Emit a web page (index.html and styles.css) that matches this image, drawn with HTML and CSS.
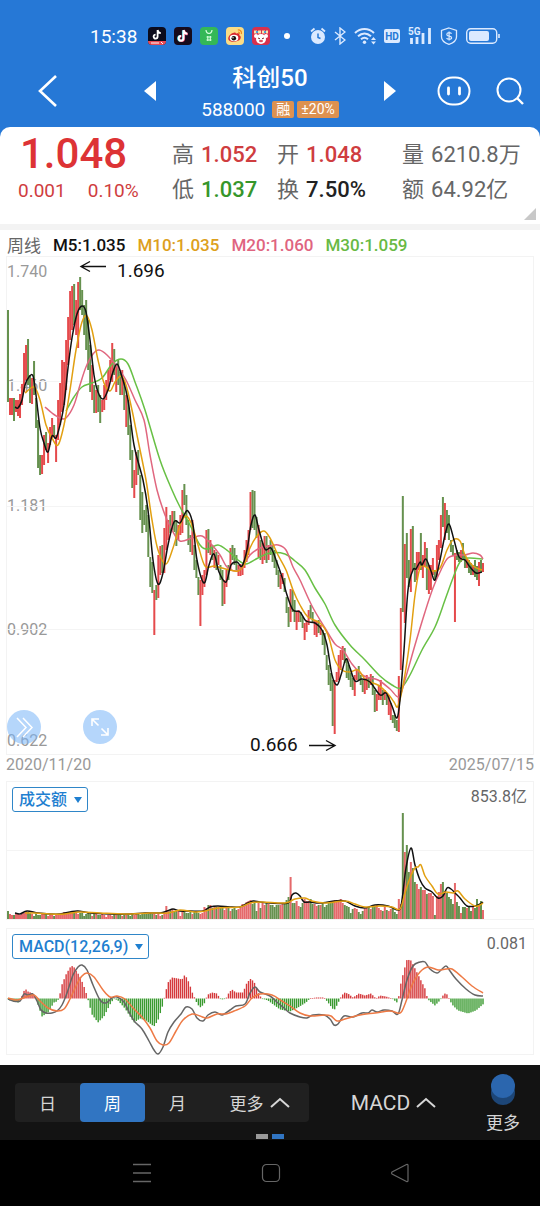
FILE: index.html
```html
<!DOCTYPE html>
<html lang="zh-CN">

<head>
    <meta charset="UTF-8">
    <meta name="viewport" content="width=device-width, initial-scale=1.0">
    <title>科创50 588000</title>
    <link rel="stylesheet" href="styles.css">
</head>

<body>
    <header class="top">
        <div class="status">
            <span class="time">15:38</span>
            <div class="apps">
                <svg width="18" height="18" viewBox="0 0 18 18"><rect width="18" height="18" rx="4" fill="#0b0b1c"/><path d="M9.6 3v6.6a2 2 0 1 1-2-2M9.6 3c.3 2 1.6 3 3.2 3.1" fill="none" stroke="#fff" stroke-width="1.8"/><path d="M0 14h18a4 4 0 0 1-4 4H4a4 4 0 0 1-4-4z" fill="#e84b55"/><path d="M3 16h8M13 15l2 2" stroke="#fff"/></svg>
                <svg width="18" height="18" viewBox="0 0 18 18"><rect width="18" height="18" rx="4" fill="#160b1c"/><path d="M9 3.500v8a2.400 2.400 0 1 1-2.400-2.400M9 3.500c.4 2.400 1.900 3.500 3.900 3.600" fill="none" stroke="#25d5dc" stroke-width="2.200"/><path d="M10 3.500v8a2.400 2.400 0 1 1-2.400-2.400M10 3.500c.4 2.400 1.900 3.500 3.900 3.600" fill="none" stroke="#e8345c" stroke-width="2.200"/><path d="M9.500 3v8.300a2.400 2.400 0 1 1-2.400-2.400M9.500 3c.4 2.400 1.900 3.700 3.900 3.800" fill="none" stroke="#fff" stroke-width="2"/></svg>
                <svg width="18" height="18" viewBox="0 0 18 18"><rect width="18" height="18" rx="4" fill="#34b857"/><path d="M6 3c.4 4.500 5.600 4.500 6 0" fill="none" stroke="#d8ffe0" stroke-width="1.200"/><path d="M6.500 10h5M6.500 13h5M7.800 9v5M10.300 9v5" stroke="#d8ffe0" stroke-width="1.100"/></svg>
                <svg width="18" height="18" viewBox="0 0 18 18"><rect width="18" height="18" rx="4" fill="#fbdc85"/><path d="M7 6c1-1 3-.8 3 .7 2-.8 3.800-.2 3.300 1.500 1.800.8 1.800 2.500.9 4-1.800 3-10.600 3.600-11.800.2C1.600 9.500 5 6.500 7 6z" fill="#d9272e"/><ellipse cx="8" cy="11" rx="4.300" ry="3.200" fill="#fff"/><circle cx="7.800" cy="11.200" r="2.300" fill="#16100e"/><circle cx="7" cy="10.800" r=".7" fill="#fff"/><path d="M11.800 3c2.400-.3 4.200 1.600 3.600 4M12 5c1.200 0 1.800.8 1.500 1.800" fill="none" stroke="#f08a1d" stroke-width="1.200"/></svg>
                <svg width="18" height="18" viewBox="0 0 18 18"><rect width="18" height="18" rx="4" fill="#d8314d"/><path d="M2 5h14" stroke="#f6e6b0" stroke-width="3" stroke-dasharray="3 1"/><path d="M4 5h2M12 5h2" stroke="#4aa4d8" stroke-width="2"/><circle cx="9" cy="12" r="5" fill="#fff"/><circle cx="4" cy="9" r="2" fill="#fff"/><circle cx="14" cy="9" r="2" fill="#fff"/><path d="M6 11l2 .8M12 11l-2 .8" stroke="#7b2b2b"/><ellipse cx="9" cy="14" rx="2" ry="1.200" fill="#e05263"/></svg>
            </div>
            <span class="dot"></span>
            <div class="signals">
                <svg width="16" height="18" viewBox="0 0 16 18"><circle cx="8" cy="10" r="7" fill="#dceaff"/><path d="M1 4.500L4.500 1.500M15 4.500L11.500 1.500" stroke="#dceaff" stroke-width="1.800"/><path d="M8 6.500V10.500l2.500 1" fill="none" stroke="#2678d6" stroke-width="1.500"/></svg>
                <svg width="12" height="18" viewBox="0 0 12 18"><path d="M1 5l10 8-5 4V1l5 4L1 13" fill="none" stroke="#dceaff" stroke-width="1.400"/></svg>
                <svg width="22" height="18" viewBox="0 0 22 18"><path d="M1 6c5.500-5.300 13.500-5.300 19 0M4 9.300c4-3.600 9-3.600 13 0M7 12.300c2.200-2 4.800-2 7 0" fill="none" stroke="#dceaff" stroke-width="2"/><circle cx="10.500" cy="15.300" r="1.700" fill="#dceaff"/><path d="M17 13l2.500-3 2.500 3zM17 14.500l2.500 3 2.500-3z" fill="#dceaff"/></svg>
                <svg width="16" height="18" viewBox="0 0 16 18"><rect y="2" width="16" height="14" rx="2" fill="#dceaff"/><text x="8" y="13" class="hd">HD</text></svg>
                <svg width="24" height="18" viewBox="0 0 24 18"><text x="0" y="8" class="net">5G</text><path d="M3.500 17v-6M9 17v-7M15 17V6M21.500 17V1" stroke="#dceaff" stroke-width="2.800"/></svg>
                <svg width="18" height="18" viewBox="0 0 18 18"><path d="M9 1l7.500 2.500V10c0 3.500-3.500 6-7.500 7.300C5 16 1.500 13.500 1.500 10V3.500z" fill="none" stroke="#dceaff" stroke-width="1.300"/><path d="M11.500 6.800C11 5.200 6.800 5.200 6.800 7.400c0 2.400 4.800 1 4.800 3.300 0 2-4.200 2-5 .2M9.100 4.500v9" fill="none" stroke="#dceaff" stroke-width="1.200"/></svg>
                <svg width="34" height="18" viewBox="0 0 34 18"><rect x=".7" y="1.700" width="30" height="14.500" rx="4" fill="none" stroke="#dceaff" stroke-width="1.400"/><rect x="3" y="4" width="20" height="10" rx="2" fill="#dceaff"/><path d="M33 7v4" stroke="#dceaff" stroke-width="1.600"/></svg>
            </div>
        </div>

        <div class="titlebar">
            <div class="side">
                <button aria-label="返回"><svg width="20" height="32" viewBox="0 0 20 32"><path d="M18 1L2 16l16 15" fill="none" stroke="#fff" stroke-width="2.600"/></svg></button>
                <button aria-label="上一个"><svg width="12" height="20" viewBox="0 0 12 20"><path d="M12 0v20L0 10z" fill="#fff"/></svg></button>
            </div>
            <div class="name">
                <h1>科创50</h1>
                <p>588000 <span class="tag first">融</span> <span class="tag">±20%</span></p>
            </div>
            <div class="side">
                <button aria-label="下一个"><svg width="12" height="20" viewBox="0 0 12 20"><path d="M0 0v20l12-10z" fill="#fff"/></svg></button>
                <div class="tools">
                    <button aria-label="助手"><svg width="34" height="30" viewBox="0 0 34 30"><rect x="1.500" y="1.500" width="31" height="27" rx="14" fill="none" stroke="#fff" stroke-width="2"/><path d="M11.500 12v6M22.500 12v6" stroke="#fff" stroke-width="2.800" stroke-linecap="round"/></svg></button>
                    <button aria-label="搜索"><svg width="28" height="28" viewBox="0 0 28 28"><circle cx="13" cy="13" r="11.500" fill="none" stroke="#fff" stroke-width="2"/><path d="M21 21l6 6" stroke="#fff" stroke-width="2.400"/></svg></button>
                </div>
            </div>
        </div>
    </header>

    <main>
        <section class="quote">
            <div class="last">
                <strong>1.048</strong>
                <p><span>0.001</span><span>0.10%</span></p>
            </div>
            <div class="pair">
                <p>高 <b class="red">1.052</b></p>
                <p>低 <b class="green">1.037</b></p>
            </div>
            <div class="pair">
                <p>开 <b class="red">1.048</b></p>
                <p>换 <b class="black">7.50%</b></p>
            </div>
            <div class="pair">
                <p>量 <span>6210.8万</span></p>
                <p>额 <span>64.92亿</span></p>
            </div>
        </section>

        <div class="ma">
            <span>周线</span>
            <b class="m5">M5:1.035</b>
            <b class="m10">M10:1.035</b>
            <b class="m20">M20:1.060</b>
            <b class="m30">M30:1.059</b>
        </div>

        <section class="panel price">
            <span class="scale s1">1.740</span>
            <span class="scale s2">1.460</span>
            <span class="scale s3">1.181</span>
            <span class="scale s4">0.902</span>
            <span class="scale s5">0.622</span>
            <svg id="price" viewBox="7 257 526 497">
                <path d="M7 381.500H533M7 506.500H533M7 629.500H533" class="grid"/>
                <g id="candles"></g>
                <g id="averages"></g>
                <path d="M106 266.500H82M90 261.500L81 266.500l9 5M309 745.500h25M326 740.500l9 5-9 5" class="arrow"/>
                <text x="117" y="277" class="mark">1.696</text>
                <text x="250" y="751" class="mark">0.666</text>
            </svg>
            <button class="round more" aria-label="展开"><svg width="34" height="34" viewBox="0 0 34 34"><path d="M10 8l9 9.500-9 9.500M16 8l9 9.500-9 9.500" fill="none" stroke="#fff" stroke-width="1.500"/></svg></button>
            <button class="round full" aria-label="全屏"><svg width="34" height="34" viewBox="0 0 34 34"><path d="M15.500 15.500L9 9M9 16V9h7M18.500 18.500L25 25M25 18v7h-7" fill="none" stroke="#fff" stroke-width="1.600"/></svg></button>
        </section>
        <div class="dates"><span>2020/11/20</span><span>2025/07/15</span></div>

        <section class="panel">
            <label class="pick"><select aria-label="副图一"><option>成交额</option></select></label>
            <span class="max">853.8亿</span>
            <svg id="volume" viewBox="7 782 526 137">
                <path d="M7 850.500H533" class="grid"/>
            </svg>
        </section>

        <section class="panel macd">
            <label class="pick"><select aria-label="副图二"><option>MACD(12,26,9)</option></select></label>
            <span class="max">0.081</span>
            <svg id="macd" viewBox="7 929 526 125"></svg>
        </section>
    </main>

    <footer class="toolbar">
        <div class="periods">
            <button>日</button>
            <button class="on">周</button>
            <button>月</button>
            <button class="wide">更多 <svg width="20" height="12" viewBox="0 0 20 12"><path d="M1 10l9-8 9 8" fill="none" stroke="#d6d6d6" stroke-width="2"/></svg></button>
        </div>
        <button class="index">MACD <svg width="20" height="12" viewBox="0 0 20 12"><path d="M1 10l9-8 9 8" fill="none" stroke="#d6d6d6" stroke-width="2"/></svg></button>
        <button class="extra"><svg width="24" height="34" viewBox="0 0 24 34"><circle cx="12" cy="20" r="12" fill="#1d4677"/><circle cx="12" cy="13" r="12" fill="#2b66ae"/></svg>更多</button>
        <div class="pages"><i></i><i class="on"></i></div>
    </footer>

    <nav class="keys">
        <button aria-label="菜单"><svg width="20" height="20" viewBox="0 0 20 20"><path d="M1 1.500h18M1 10h18M1 18.500h18" stroke="#666" stroke-width="1.400"/></svg></button>
        <button aria-label="主页"><svg width="20" height="20" viewBox="0 0 20 20"><rect x="1.500" y="1.500" width="17" height="17" rx="4" fill="none" stroke="#666" stroke-width="1.200"/></svg></button>
        <button aria-label="后退"><svg width="20" height="20" viewBox="0 0 20 20"><path d="M18 2v16q-.5 1-1.500.5L2 11q-1-1 0-2L16.500 1.500Q17.500 1 18 2z" fill="none" stroke="#666" stroke-width="1.200"/></svg></button>
    </nav>

    <script src="chart.js"></script>
</body>

</html>
```
FILE: styles.css
```css
body {
    margin: 0;
    background-color: #fff;
    color: #666;
    font-family: Roboto, "Noto Sans CJK SC", sans-serif;
    font-size: 16px;
}

h1,
p {
    margin: 0;
}

svg {
    display: block;
}

button {
    padding: 0;
    border: none;
    background: none;
    color: inherit;
    font: inherit;
    cursor: pointer;
}

/* header */
.top {
    background-color: #2678d6;
    color: #fff;
    padding: 24px 0 16px;
}

.status {
    display: flex;
    align-items: center;
    height: 24px;
    padding-left: 90px;
}

.time {
    width: 58px;
    font-size: 19px;
}

.apps {
    display: flex;
    gap: 8px;
}

.dot {
    width: 6px;
    height: 6px;
    margin: 0 20px 0 14px;
    border-radius: 50%;
    background-color: #fff;
}

.signals {
    display: flex;
    gap: 8px;
}

.hd {
    font-size: 10px;
    font-weight: bold;
    fill: #2678d6;
    text-anchor: middle;
}

.net {
    font-size: 10px;
    font-weight: bold;
    fill: #dceaff;
}

.titlebar {
    display: grid;
    grid-template-columns: 118fr 228fr 140fr;
    align-items: center;
    padding: 16px 16px 0 38px;
}

.side,
.tools {
    display: flex;
    align-items: center;
    justify-content: space-between;
}

.side {
    padding-bottom: 8px;
}

.tools {
    gap: 25px;
}

.name {
    text-align: center;
}

.name h1 {
    font-size: 24px;
    font-weight: 500;
    line-height: 28px;
}

.name p {
    display: flex;
    align-items: center;
    justify-content: center;
    gap: 3px;
    height: 34px;
    font-size: 19px;
}

.tag {
    padding: 0 4px;
    border-radius: 2px;
    background-color: #dd9150;
    font-size: 14px;
    line-height: 17px;
}

.tag.first {
    margin-left: 4px;
}

/* quote */
main {
    margin-top: -15px;
    border-radius: 10px 10px 0 0;
    background-color: #fff;
    overflow: hidden;
}

.quote {
    position: relative;
    display: grid;
    grid-template-columns: 154fr 105fr 125fr 138fr;
    height: 97px;
    padding-left: 18px;
    border-bottom: 6px solid #f3f3f3;
}

.quote::after {
    content: "";
    position: absolute;
    right: 4px;
    bottom: 4px;
    border-left: 12px solid transparent;
    border-bottom: 12px solid #c8c8c8;
}

.last {
    color: #cf3d40;
}

.last strong {
    display: block;
    padding: 3px 0 0 2px;
    color: #dd3335;
    font-size: 42px;
    font-weight: 500;
    line-height: 48px;
}

.last p {
    display: flex;
    gap: 22px;
    font-size: 19px;
    line-height: 26px;
}

.pair {
    padding-top: 10px;
}

.pair p {
    display: flex;
    align-items: center;
    gap: 7px;
    font-size: 22px;
    line-height: 35px;
    white-space: nowrap;
}

.pair b {
    font-weight: 500;
}

.red {
    color: #cf3d40;
}

.green {
    color: #36962b;
}

.black {
    color: #222;
}

/* moving averages */
.ma {
    display: flex;
    align-items: center;
    gap: 12px;
    height: 25px;
    padding: 2px 7px 0;
    font-size: 17px;
}

.ma b {
    font-weight: 500;
}

.m5 {
    color: #111;
}

.m10 {
    color: #dda01c;
}

.m20 {
    color: #df6480;
}

.m30 {
    color: #68b944;
}

/* charts */
.panel {
    position: relative;
    margin: 0 7px;
    box-shadow: 0 0 0 1px #f3f3f3;
}

.panel > svg {
    position: relative;
    width: 100%;
    height: auto;
    overflow: visible;
}

.scale {
    position: absolute;
    left: 0;
    color: #999;
    line-height: 20px;
}

.s1 {
    top: 1%;
}

.s2 {
    top: 24%;
}

.s3 {
    top: 48%;
}

.s4 {
    top: 73%;
}

.s5 {
    bottom: 3px;
}

.grid {
    stroke: #f4f4f4;
}

.arrow {
    fill: none;
    stroke: #111;
    stroke-width: 1.400;
}

.mark {
    font-size: 19px;
    fill: #111;
}

.line {
    fill: none;
    stroke-width: 1.500;
    stroke-linejoin: round;
}

.round {
    position: absolute;
    bottom: 10px;
    border-radius: 50%;
    background-color: rgba(120, 180, 248, 0.55);
}

.more {
    left: 0;
}

.full {
    left: 76px;
}

.dates {
    display: flex;
    justify-content: space-between;
    padding: 0 6px;
    margin-bottom: 6px;
    color: #999;
    line-height: 22px;
}

.pick {
    position: absolute;
    z-index: 1;
    top: 5px;
    left: 5px;
}

.pick select {
    appearance: none;
    height: 25px;
    padding: 0 19px 0 6px;
    border: 1px solid #2f86c8;
    border-radius: 3px;
    background-color: #fff;
    color: #1f7fd0;
    font: inherit;
    font-weight: 500;
}

.pick::after {
    content: "";
    position: absolute;
    top: 10px;
    right: 6px;
    border: 4px solid transparent;
    border-top: 6px solid #1f7fd0;
    border-bottom: none;
    pointer-events: none;
}

.max {
    position: absolute;
    top: 5px;
    right: 6px;
    line-height: 20px;
}

.macd {
    margin-top: 10px;
    margin-bottom: 11px;
}

/* bottom bars */
.toolbar {
    position: relative;
    display: flex;
    align-items: center;
    justify-content: space-between;
    height: 75px;
    padding: 0 20px 0 15px;
    background-color: #131313;
    color: #d6d6d6;
}

.periods {
    display: flex;
    border-radius: 4px;
    background-color: #202020;
}

.periods button {
    width: 65px;
    height: 39px;
    border-radius: 4px;
    font-size: 17px;
}

.periods .on {
    background-color: #3175c2;
    color: #fff;
}

.periods .wide {
    width: 99px;
}

.wide,
.index {
    display: flex;
    align-items: center;
    justify-content: center;
    gap: 6px;
}

.index {
    margin-right: 8px;
    font-size: 21px;
}

.extra {
    display: flex;
    flex-direction: column;
    align-items: center;
    gap: 4px;
    padding-top: 2px;
    font-size: 17px;
    line-height: 24px;
}

.pages {
    position: absolute;
    bottom: 1px;
    left: 50%;
    display: flex;
    gap: 4px;
    transform: translateX(-50%);
}

.pages i {
    width: 12px;
    height: 5px;
    background-color: #999;
}

.pages .on {
    background-color: #3175c2;
}

.keys {
    display: flex;
    justify-content: space-between;
    padding: 23px 130px 23px 132px;
    background-color: #000;
}
```
FILE: chart.js
```js
const START = 8;
const STEP = 475 / 237;

// one candle per week: colour, top, bottom
const candles = `g310-402 r398-415 r398-415 g398-421 r400-412 r400-416 r394-418 r384-405 r353-392 r345-380
g339-385 g375-403 r378-404 g361-395 g398-428 g420-468 g455-475 r455-474 r435-465 g432-450
r443-463 r427-445 r418-438 g425-437 r435-462 r400-440 r383-425 r360-412 r362-405 r340-390
r317-365 r291-340 r286-330 g284-325 r300-335 r282-348 g277-310 g290-315 g305-335 g300-350
g320-370 g345-392 r365-400 g385-413 r390-413 g385-412 g395-423 r400-412 r385-410 r380-400
r370-390 r360-380 r343-382 g349-375 r365-392 g360-385 g372-395 r370-395 g380-410 r395-427
g400-435 g425-460 g450-488 r470-498 r452-485 g450-475 g475-520 g492-533 g510-525 g505-532
g515-557 g557-587 g562-593 r590-635 g585-600 r555-598 r546-575 g545-573 r528-573 r507-550
r520-540 g515-533 r511-530 g511-532 g520-546 r525-540 r515-535 r490-533 g484-505 g495-525
g520-545 g535-552 r520-555 g545-570 g560-578 g577-595 r580-626 r575-595 r570-587 r530-575
g529-553 r540-555 g545-560 r550-568 g552-570 r555-565 g565-580 g570-606 r580-604 r570-587
g565-580 r548-570 g545-560 g548-565 g555-570 r565-576 r564-576 r565-575 r550-568 r540-562
r530-555 r492-530 g490-528 g491-530 g517-538 r525-557 g540-560 r543-564 r536-560 g536-563
r545-560 g540-555 g545-562 g550-568 g560-575 g570-587 r575-589 r573-584 g578-592 g597-613
g607-627 r589-622 g590-612 g600-622 r612-630 r610-622 g612-622 g617-628 r623-640 r620-632
r610-625 g605-618 g612-622 r620-635 r621-637 g620-633 r625-635 g630-645 g633-655 g655-670
g665-685 g673-691 g680-726 r680-734 r672-682 r655-680 r650-670 r646-660 g648-663 g658-678
g665-680 g673-687 g678-690 r675-696 r670-680 g666-680 g675-685 g680-692 r678-694 r675-690
g678-688 r674-685 g676-695 g690-712 r694-711 r685-700 r680-700 g690-705 r690-700 g695-705
r695-715 r703-720 g715-723 g715-728 g720-731 r676-732 r608-670 g496-612 r544-623 g533-578
g560-587 r529-592 g526-570 g563-582 r552-580 r552-570 g533-570 r555-578 r542-567 g548-590
r565-594 r565-590 r558-575 g570-580 r545-577 r540-560 r515-548 g497-527 r503-540 g510-533
g515-540 g540-552 g545-556 r553-622 g550-560 g552-562 r550-562 g543-558 g555-568 r558-568
g560-573 g563-575 r565-575 g560-577 g566-580 r562-586 g560-572 r563-572`.split(/\s+/);

const volumes = [
    8, 5, 4, 4, 5, 5, 4, 5, 6, 7, 7, 6, 5, 3, 5, 4, 4, 6, 5, 5,
    3, 4, 4, 3, 4, 5, 5, 6, 7, 6, 6, 7, 7, 6, 7, 5, 6, 6, 3, 5,
    6, 5, 3, 5, 5, 4, 4, 5, 4, 2, 4, 4, 3, 5, 4, 4, 4, 3, 4, 4,
    5, 3, 5, 4, 5, 5, 4, 5, 6, 5, 5, 6, 5, 5, 4, 5, 3, 4, 7, 13,
    9, 9, 10, 8, 8, 8, 3, 7, 7, 6, 6, 8, 5, 7, 7, 6, 5, 6, 12, 11,
    14, 14, 11, 13, 12, 12, 11, 13, 9, 12, 11, 8, 10, 11, 9, 10, 11, 15, 14, 17,
    18, 19, 15, 17, 8, 16, 11, 17, 14, 16, 15, 14, 14, 12, 14, 14, 14, 15, 16, 19,
    22, 42, 16, 16, 18, 13, 12, 16, 20, 18, 18, 20, 15, 15, 13, 14, 14, 16, 12, 14,
    16, 16, 18, 19, 17, 18, 20, 16, 14, 13, 12, 6, 10, 11, 10, 7, 5, 8, 10, 11,
    12, 10, 12, 12, 14, 11, 9, 8, 12, 9, 8, 10, 10, 7, 5, 20, 15, 106, 67, 74,
    47, 57, 51, 37, 35, 30, 32, 29, 29, 25, 26, 26, 23, 4, 23, 27, 35, 37, 28, 26,
    22, 20, 15, 36, 17, 13, 6, 12, 12, 11, 13, 8, 12, 11, 20, 14, 18, 9
];

// the histogram is given at its turning points: x, height
const bars = [[8, 0], [10, -2], [18, -4], [21, 0], [23, 5], [25, 10], [28, 7], [33, 5], [36, 0], [38, -6],
    [42, -18], [48, -14], [54, -4], [57, -3], [59, 0], [62, 14], [66, 24], [70, 31], [73, 33], [76, 28],
    [80, 22], [84, 12], [87, 3], [89, -5], [92, -16], [98, -24], [104, -18], [110, -6], [114, 0], [118, -2],
    [125, -10], [134, -24], [140, -20], [146, -22], [154, -28], [158, -22], [163, -6], [165, 4], [168, 16], [172, 21],
    [178, 20], [182, 19], [185, 24], [189, 16], [193, 4], [195, 0], [197, -5], [200, -9], [204, -6], [206, 0],
    [208, 4], [212, 6], [217, 5], [220, 0], [222, -1], [226, 0], [229, 6], [232, 9], [236, 6], [243, 6],
    [247, 16], [251, 20], [255, 15], [259, 4], [262, 0], [268, -2], [272, -5], [280, -11], [290, -13], [298, -9],
    [306, -4], [310, 0], [316, 1], [324, 1], [328, -4], [334, -12], [338, -5], [340, 0], [344, 6], [348, 5],
    [353, 1], [359, 5], [365, 3], [371, 5], [376, 0], [380, 3], [386, 2], [392, 0], [397, -4], [399, 3],
    [401, 16], [404, 28], [407, 39], [411, 38], [415, 30], [420, 20], [425, 10], [427, 2], [429, -2], [435, -7],
    [440, -2], [442, 2], [446, 6], [449, 0], [452, -6], [458, -12], [468, -15], [476, -12], [484, -5]];

const m5 = "15,407 18,408 22,400 25,385 29,377 33,376 36,395 40,428 44,443 48,452 52,436 56,438 60,425 64,405 68,368 72,338 77,314 82,306 86,312 90,340 94,375 98,392 103,399 108,390 112,375 117,364 122,377 128,400 134,445 143,480 148,510 153,560 158,584 163,573 168,545 174,522 180,523 184,515 188,511 193,525 197,560 204,583 209,565 214,554 219,572 226,582 231,565 237,562 242,566 247,550 251,525 255,515 259,530 265,549 271,548 276,560 282,577 287,595 293,610 300,612 306,621 315,623 322,630 327,645 332,675 337,685 341,675 346,659 350,668 355,681 362,679 370,682 380,695 386,693 392,706 397,718 400,700 404,650 408,590 413,570 416,569 420,562 422,565 426,559 431,571 435,580 440,560 445,535 449,524 454,540 459,557 465,560 470,567 476,573 482,572";
const m10 = "25,393 34,387 40,400 46,425 52,438 58,445 64,425 70,390 76,350 82,322 87,316 92,330 98,360 104,383 110,391 115,382 121,376 126,385 132,410 138,440 146,480 152,520 158,550 166,564 173,548 180,525 186,516 192,525 198,545 205,566 214,566 222,568 230,570 238,571 244,565 250,548 257,536 264,531 270,538 278,555 286,570 293,590 300,605 308,617 320,623 328,635 335,660 342,670 350,672 358,670 366,680 378,685 388,694 394,702 398,706 404,680 410,640 415,595 420,568 426,567 432,571 440,568 447,550 453,540 460,541 465,555 473,566 482,570";
const m20 = "45,407 52,413 60,418 66,418 74,405 80,385 86,367 93,354 99,350 107,355 118,368 126,380 135,400 144,420 150,455 157,490 165,515 172,530 180,541 192,538 202,536 212,545 220,555 227,567 236,571 243,566 250,555 260,548 270,546 278,545 286,550 293,567 300,580 312,606 325,628 335,644 343,650 352,664 364,676 378,680 390,689 399,697 405,680 415,645 425,612 433,588 441,570 448,558 458,555 465,555 473,553 480,555 483,559";
const m30 = "66,411 74,397 82,387 92,383 102,378 112,364 121,359 128,364 135,382 145,410 160,460 172,490 180,507 190,525 200,545 208,549 218,545 228,551 238,560 246,564 258,558 270,553 285,554 295,561 305,570 315,588 325,604 335,625 350,645 365,660 380,676 392,685 401,688 410,675 422,650 435,627 445,600 453,578 460,562 468,558 483,559";
const vol5 = "15,913 20,914 27,911 38,913 50,914 60,914 70,912 78,911 90,913 110,914 130,914 145,913 160,913 167,911 173,909 180,911 190,911 203,911 210,907 218,906 230,907 240,907 246,904 253,901 260,902 270,903 288,903 292,895 296,893 300,896 304,902 310,902 320,903 335,901 345,901 355,906 365,908 375,905 388,906 399,910 402,900 406,868 411,848 415,865 420,880 425,888 432,892 438,898 443,896 447,888 451,889 456,894 460,898 467,906 475,906 480,904 483,902";
const vol10 = "25,913 35,913 50,914 65,914 80,912 100,913 125,914 150,913 168,913 180,910 195,912 205,911 218,908 240,907 250,903 262,902 285,903 295,899 305,898 312,901 325,903 345,901 355,904 365,907 380,906 392,907 400,909 405,893 410,878 415,868 418,867 421,865 425,876 432,886 438,894 446,892 453,893 458,891 465,899 475,906 480,905 483,903";
const dif = "8,999 13,1001 20,1001 24,994 28,995 33,994 37,1001 41,1010 46,1013 52,1013 57,1011 62,1005 67,993 73,975 78,967 82,965 87,970 93,985 100,1000 106,1003 112,998 117,997 124,1002 130,1014 135,1022 142,1029 149,1041 154,1050 158,1054 163,1047 168,1032 174,1022 181,1014 186,1007 192,1009 197,1018 203,1021 208,1015 215,1012 222,1015 230,1010 236,1006 245,1004 250,993 255,987 260,992 270,996 278,1003 284,1008 290,1013 300,1017 307,1018 313,1015 324,1015 330,1019 334,1025 338,1024 344,1016 353,1017 362,1013 368,1013 372,1010 377,1012 384,1010 392,1011 398,1014 402,1000 407,980 413,966 420,962 425,962 430,969 437,973 441,970 446,966 450,971 456,979 466,989 475,995 483,996";
const dea = "8,998 17,1000 26,997 34,995 40,1001 48,1008 57,1011 64,1009 70,999 77,984 82,976 87,973 94,977 103,990 110,997 117,996 125,999 134,1009 142,1017 150,1028 157,1041 163,1045 169,1043 176,1031 183,1020 192,1014 200,1016 207,1018 217,1014 226,1014 234,1011 245,1006 252,998 260,994 272,995 282,1001 290,1006 300,1013 310,1016 325,1015 331,1016 337,1021 345,1019 360,1015 375,1013 390,1011 400,1013 405,1004 412,985 420,972 428,967 438,970 446,969 452,969 462,977 472,986 483,993";

function draw(parent, tag, attrs) {
    const el = document.createElementNS("http://www.w3.org/2000/svg", tag);
    for (let key in attrs) {
        el.setAttribute(key, attrs[key]);
    }
    parent.appendChild(el);
}

function bar(parent, x, top, height, width, fill) {
    draw(parent, "rect", { x: x - width / 2, y: top, width: width, height: height, fill: fill });
}

// smooth line that passes through every point
function line(parent, points, color) {
    const p = points.split(" ").map(s => s.split(",").map(Number));
    let d = `M${p[0]}`;
    for (let i = 0; i < p.length - 1; i++) {
        const a = p[i - 1] || p[i];
        const b = p[i];
        const c = p[i + 1];
        const e = p[i + 2] || c;
        d += `C${b[0] + (c[0] - a[0]) / 6} ${b[1] + (c[1] - a[1]) / 6} ${c[0] - (e[0] - b[0]) / 6} ${c[1] - (e[1] - b[1]) / 6} ${c[0]} ${c[1]}`;
    }
    draw(parent, "path", { d: d, class: "line", stroke: color });
}

function valueAt(points, x) {
    for (let i = 1; i < points.length; i++) {
        const [x1, y1] = points[i - 1];
        const [x2, y2] = points[i];
        if (x <= x2) {
            return y1 + (y2 - y1) * (x - x1) / (x2 - x1);
        }
    }
    return 0;
}

const price = document.getElementById("candles");
const averages = document.getElementById("averages");
const volume = document.getElementById("volume");
const macd = document.getElementById("macd");

candles.forEach((item, i) => {
    const x = START + i * STEP;
    const up = item[0] === "r";
    const [top, bottom] = item.slice(1).split("-").map(Number);
    bar(price, x, top, bottom - top, 2, up ? "#e54a4c" : "#66914f");

    const v = volumes[i];
    bar(volume, x, 919 - v, v, 2, up ? "#e5696b" : "#66914f");

    const h = valueAt(bars, x);
    bar(macd, x, h > 0 ? 998.5 - h : 998.5, Math.max(Math.abs(h), 0.6), 1.4, h > 0 ? "#d5393c" : "#3a9a30");
});

line(averages, m30, "#68c045");
line(averages, m20, "#e0677f");
line(averages, m10, "#e2a011");
line(averages, m5, "#111");
line(volume, vol5, "#111");
line(volume, vol10, "#e2a011");
line(macd, dif, "#666");
line(macd, dea, "#ee7a45");
```
